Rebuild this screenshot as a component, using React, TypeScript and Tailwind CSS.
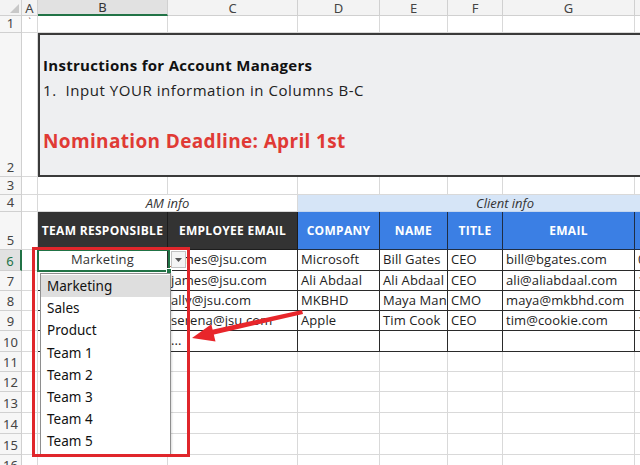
import React from "react";

const GRID = "border-r border-b border-[#d9d9d9]";
const TBL = "border-r border-b border-[#2a2a2a]";
const ROWHDR =
  "flex items-end justify-center pb-[1px] leading-[15px] bg-[#f6f6f6] border-r border-b border-[#d0d0d0] text-[13px] text-[#444]";

const sans = { fontFamily: "'Open Sans', 'Noto Sans', sans-serif" };

const rows = [
  ["james@jsu.com", "Microsoft", "Bill Gates", "CEO", "bill@bgates.com", "0"],
  ["james@jsu.com", "Ali Abdaal", "Ali Abdaal", "CEO", "ali@aliabdaal.com", "1"],
  ["ally@jsu.com", "MKBHD", "Maya Man", "CMO", "maya@mkbhd.com", ""],
  ["serena@jsu.com", "Apple", "Tim Cook", "CEO", "tim@cookie.com", "15"],
  ["...", "", "", "", "", ""],
];

const teams = ["Marketing", "Sales", "Product", "Team 1", "Team 2", "Team 3", "Team 4", "Team 5"];

const Empty = ({ n }: { n: number }) => (
  <>
    {Array.from({ length: n }).map((_, i) => (
      <div key={i} className={GRID} />
    ))}
  </>
);

export default function App() {
  return (
    <div
      className="relative w-[640px] h-[465px] overflow-hidden bg-white"
      style={{ fontFamily: "'Noto Sans', 'Liberation Sans', sans-serif" }}
    >
      <div className="grid w-[712px] grid-cols-[22px_16px_130px_130px_82px_68px_55px_132px_77px] grid-rows-[16px_17px_144px_18px_17px_38px_21px_20px_20px_20px_21px_20px_20px_21px_21px_21px_20px]">
        {/* column headers */}
        <div className="relative bg-[#f3f3f3] border-r border-b border-[#d0d0d0]">
          <svg className="absolute right-[2px] bottom-[2px]" width="9" height="9" viewBox="0 0 9 9">
            <polygon points="9,0 9,9 0,9" fill="#c8c8c8" />
          </svg>
        </div>
        {["A", "B", "C", "D", "E", "F", "G", "H"].map((c) => (
          <div
            key={c}
            className={
              c === "B"
                ? "flex items-center justify-center leading-[14px] bg-[#e1e1e1] border-r border-[#d0d0d0] border-b-2 border-b-[#217346] text-[13px] text-[#333]"
                : "flex items-center justify-center leading-[14px] bg-[#f3f3f3] border-r border-b border-[#d0d0d0] text-[13px] text-[#444]"
            }
          >
            {c}
          </div>
        ))}

        {/* row 1 */}
        <div className={ROWHDR}>1</div>
        <div className={`${GRID} flex justify-center pt-[2px] text-[8px] leading-[8px] text-[#555]`}>`</div>
        <Empty n={7} />

        {/* row 2 */}
        <div className={ROWHDR}>2</div>
        <div className={GRID} />
        <div
          className="col-span-7 flex flex-col pl-[3px] pt-[19px] bg-[#eeeff1] border-y-2 border-l-2 border-[#3a3a3a] text-[#111]"
          style={sans}
        >
          <div className="text-[15px] font-bold leading-[22px] tracking-[0.3px]">
            Instructions for Account Managers
          </div>
          <div className="mt-[3px] text-[15px] leading-[22px] tracking-[0.55px] text-[#222]">
            1.&nbsp; Input YOUR information in Columns B-C
          </div>
          <div className="mt-[27px] text-[19px] font-bold leading-[26px] tracking-[0.35px] text-[#e03a35]">
            Nomination Deadline: April 1st
          </div>
        </div>

        {/* row 3 */}
        <div className={ROWHDR}>3</div>
        <Empty n={8} />

        {/* row 4 */}
        <div className={ROWHDR}>4</div>
        <div className={GRID} />
        <div
          className={`col-span-2 ${GRID} flex items-center justify-center leading-[15px] text-[13px] italic text-[#333]`}
          style={sans}
        >
          AM info
        </div>
        <div
          className="col-span-5 flex items-center justify-center leading-[15px] bg-[#d6e5f7] border-b border-[#c4d6ee] text-[13px] italic text-[#333]"
          style={sans}
        >
          Client info
        </div>

        {/* row 5 */}
        <div className={ROWHDR}>5</div>
        <div className={GRID} />
        {["TEAM RESPONSIBLE", "EMPLOYEE EMAIL"].map((h) => (
          <div
            key={h}
            className="flex items-center justify-center overflow-hidden whitespace-nowrap bg-[#333333] border-r border-b border-[#1c1c1c] text-[12px] font-bold tracking-[0.3px] text-white"
            style={sans}
          >
            {h}
          </div>
        ))}
        {["COMPANY", "NAME", "TITLE", "EMAIL", ""].map((h, i) => (
          <div
            key={i}
            className="flex items-center justify-center overflow-hidden whitespace-nowrap bg-[#3b7fe4] border-r border-b border-[#1f2d44] text-[12px] font-bold tracking-[0.3px] text-white"
            style={sans}
          >
            {h}
          </div>
        ))}

        {/* rows 6-10 */}
        {rows.map((r, i) => (
          <React.Fragment key={i}>
            <div
              className={
                i === 0
                  ? "flex items-end justify-center pb-[1px] leading-[15px] bg-[#e1e1e1] border-b border-[#d0d0d0] border-r-2 border-r-[#217346] text-[13px] text-[#217346]"
                  : ROWHDR
              }
            >
              {6 + i}
            </div>
            <div className={GRID} />
            <div
              className={`${TBL} flex items-center justify-center text-[13px] tracking-[0.2px] text-[#333]`}
              style={sans}
            >
              {i === 0 ? "Marketing" : ""}
            </div>
            {r.map((v, j) => (
              <div
                key={j}
                className={`${TBL} flex items-center overflow-hidden whitespace-nowrap pl-[3px] text-[13px] tracking-[0.1px] text-[#222]`}
                style={sans}
              >
                {v}
              </div>
            ))}
          </React.Fragment>
        ))}

        {/* rows 11-16 */}
        {[11, 12, 13, 14, 15, 16].map((n) => (
          <React.Fragment key={n}>
            <div className={ROWHDR}>{n}</div>
            <Empty n={8} />
          </React.Fragment>
        ))}
      </div>

      {/* active cell */}
      <div className="absolute left-[37px] top-[249px] w-[133px] h-[23px] border-2 border-[#217346]" />
      <div className="absolute left-[166px] top-[268px] w-[6px] h-[6px] bg-[#217346] border border-white" />

      {/* dropdown button */}
      <div className="absolute left-[171px] top-[251px] w-[15px] h-[17px] flex items-center justify-center bg-[#f4f4f4] border border-[#c2c2c2]">
        <svg width="7" height="4" viewBox="0 0 7 4">
          <polygon points="0,0 7,0 3.5,4" fill="#555" />
        </svg>
      </div>

      {/* dropdown list */}
      <div className="absolute left-[40px] top-[273px] w-[131px] h-[182px] flex flex-col pt-[1px] bg-white border border-[#8e8e8e] shadow-[1px_1px_2px_rgba(0,0,0,0.15)]">
        {teams.map((t, i) => (
          <div
            key={t}
            className={`h-[22.2px] flex items-center pl-[6px] text-[13.5px] text-[#111] ${
              i === 0 ? "bg-[#dedede]" : ""
            }`}
          >
            {t}
          </div>
        ))}
      </div>

      {/* red highlight */}
      <div className="absolute left-[32px] top-[247px] w-[158px] h-[210px] border-[3px] border-[#e0262b]" />

      {/* arrow */}
      <svg className="absolute left-0 top-0" width="640" height="465" viewBox="0 0 640 465">
        <polygon points="302,310 303,314 212,335 211,330" fill="#e8262b" />
        <polygon points="192,338 211.3,324.2 215.5,341.6" fill="#e8262b" />
      </svg>
    </div>
  );
}
